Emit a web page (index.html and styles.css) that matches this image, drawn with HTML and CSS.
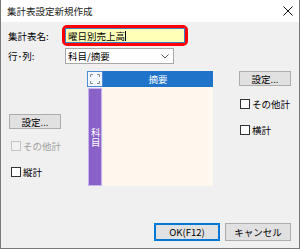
FILE: index.html
```html
<!DOCTYPE html>
<html lang="ja">
  <head>
    <meta charset="utf-8">
    <title>集計表設定新規作成</title>
    <link rel="stylesheet" href="styles.css">
  </head>
  <body>
    <div class="dialog">
      <div class="titlebar">
        <span class="title">集計表設定新規作成</span>
        <svg class="close" width="10" height="10" viewBox="0 0 10 10">
          <path d="M0.5 0.5 L9.5 9.5 M9.5 0.5 L0.5 9.5" stroke="#111" stroke-width="1" fill="none"/>
        </svg>
      </div>
      <div class="content">
        <div class="field">
          <span class="field-label">集計表名:</span>
          <div class="highlight">
            <div class="text-input">曜日別売上高<span class="caret"></span></div>
          </div>
        </div>
        <div class="field field-select">
          <span class="field-label">行･列:</span>
          <div class="select">
            <span>科目/摘要</span>
            <svg width="8" height="5" viewBox="0 0 8 5">
              <path d="M0.5 0.5 L4 4 L7.5 0.5" stroke="#555" stroke-width="1" fill="none"/>
            </svg>
          </div>
        </div>
        <div class="layout">
          <div class="side side-left">
            <div class="btn btn-small">設定...</div>
            <div class="check check-disabled"><span class="box"></span>その他計</div>
            <div class="check check-last"><span class="box"></span>縦計</div>
          </div>
          <div class="pivot">
            <div class="corner">
              <svg width="16" height="16" viewBox="0 0 16 16">
                <rect x="0.5" y="0.5" width="15" height="15" fill="#f4f7fb" stroke="#4f8ad6"/>
                <path d="M3.5 6 V3.5 H6 M10 3.5 H12.5 V6 M12.5 10 V12.5 H10 M6 12.5 H3.5 V10" stroke="#7a8899" stroke-width="1" fill="none"/>
              </svg>
            </div>
            <div class="col-header">摘要</div>
            <div class="row-header"><span>科目</span></div>
            <div class="cells"></div>
          </div>
          <div class="side side-right">
            <div class="btn btn-small">設定...</div>
            <div class="check"><span class="box"></span>その他計</div>
            <div class="check check-last"><span class="box"></span>横計</div>
          </div>
        </div>
        <div class="actions">
          <div class="btn btn-action btn-default">OK(F12)</div>
          <div class="btn btn-action">キャンセル</div>
        </div>
      </div>
    </div>
  </body>
</html>
```

FILE: styles.css
```css
body { margin: 0; padding: 0; background: #f0f0f0 }

.dialog {
  display: flex;
  flex-direction: column;
  width: 300px;
  height: 249px;
  box-sizing: border-box;
  border: 1px solid #7a7a7a;
  border-top: none;
  font-family: "Noto Sans CJK JP", "Noto Sans", sans-serif;
  font-size: 9.5px;
  color: #000;
}

.titlebar {
  display: flex;
  align-items: center;
  justify-content: space-between;
  height: 22px;
  padding: 0 6px 0 6px;
  background: #fff;
}

.title {
  color: #222;
}

.content {
  flex: 1;
  display: flex;
  flex-direction: column;
  padding: 3px 8px 7px 7px;
  background: #f0f0f0;
}

.field {
  display: flex;
  align-items: center;
}

.field-label {
  width: 54px;
}

.highlight {
  border: 3px solid #ff0000;
  border-radius: 5px;
}

.text-input {
  display: flex;
  align-items: center;
  width: 116px;
  height: 13px;
  padding-left: 2px;
  border: 1px solid #3c7fc4;
  background: #ffffb8;
}

.caret {
  width: 1px;
  height: 10px;
  background: #000;
}

.field-select {
  margin-top: 2px;
}

.select {
  display: flex;
  align-items: center;
  justify-content: space-between;
  width: 101px;
  height: 14px;
  margin-left: 3px;
  padding: 0 4px 0 2px;
  border: 1px solid #a8a8a8;
  background: #fff;
}

.layout {
  display: grid;
  grid-template-columns: 79px 126px 79px;
  margin-top: 7px;
}

.side-left {
  padding-top: 43px;
}

.side-right {
  padding-left: 26px;
}

.btn {
  display: flex;
  align-items: center;
  justify-content: center;
  box-sizing: border-box;
  border: 1px solid #adadad;
  background: #e1e1e1;
}

.btn-small {
  width: 52px;
  height: 15px;
}

.side-left .btn-small {
  margin-left: 1px;
}

.check {
  display: flex;
  align-items: center;
  height: 13px;
  margin-top: 10px;
  margin-left: 3px;
}

.side-right .check {
  margin-left: 1px;
  margin-top: 11px;
}

.check-last {
  margin-top: 13px !important;
}

.box {
  width: 8px;
  height: 8px;
  margin-right: 2px;
  border: 1px solid #333;
  background: #fff;
}

.check-disabled {
  color: #a0a0a0;
}

.check-disabled .box {
  border-color: #c4c4c4;
  background: #f2f2f2;
}

.pivot {
  display: grid;
  grid-template-columns: 16px 110px;
  grid-template-rows: 16px 99px;
}

.corner svg {
  display: block;
}

.col-header {
  display: flex;
  align-items: center;
  justify-content: center;
  background: #1f73c9;
  color: #fff;
}

.row-header {
  display: flex;
  align-items: center;
  justify-content: center;
  margin: 1px 1px 0 1px;
  border: 1px solid #c8b6ea;
  background: #8a61c8;
  color: #fff;
}

.row-header span {
  writing-mode: vertical-rl;
  line-height: 1;
}

.cells {
  background: #fff8ef;
}

.actions {
  display: flex;
  justify-content: flex-end;
  gap: 5px;
  margin-top: auto;
}

.btn-action {
  width: 66px;
  height: 18px;
}

.btn-default {
  border: 1px solid #0078d7;
  box-shadow: inset 0 0 0 1px #0078d7;
}
```
